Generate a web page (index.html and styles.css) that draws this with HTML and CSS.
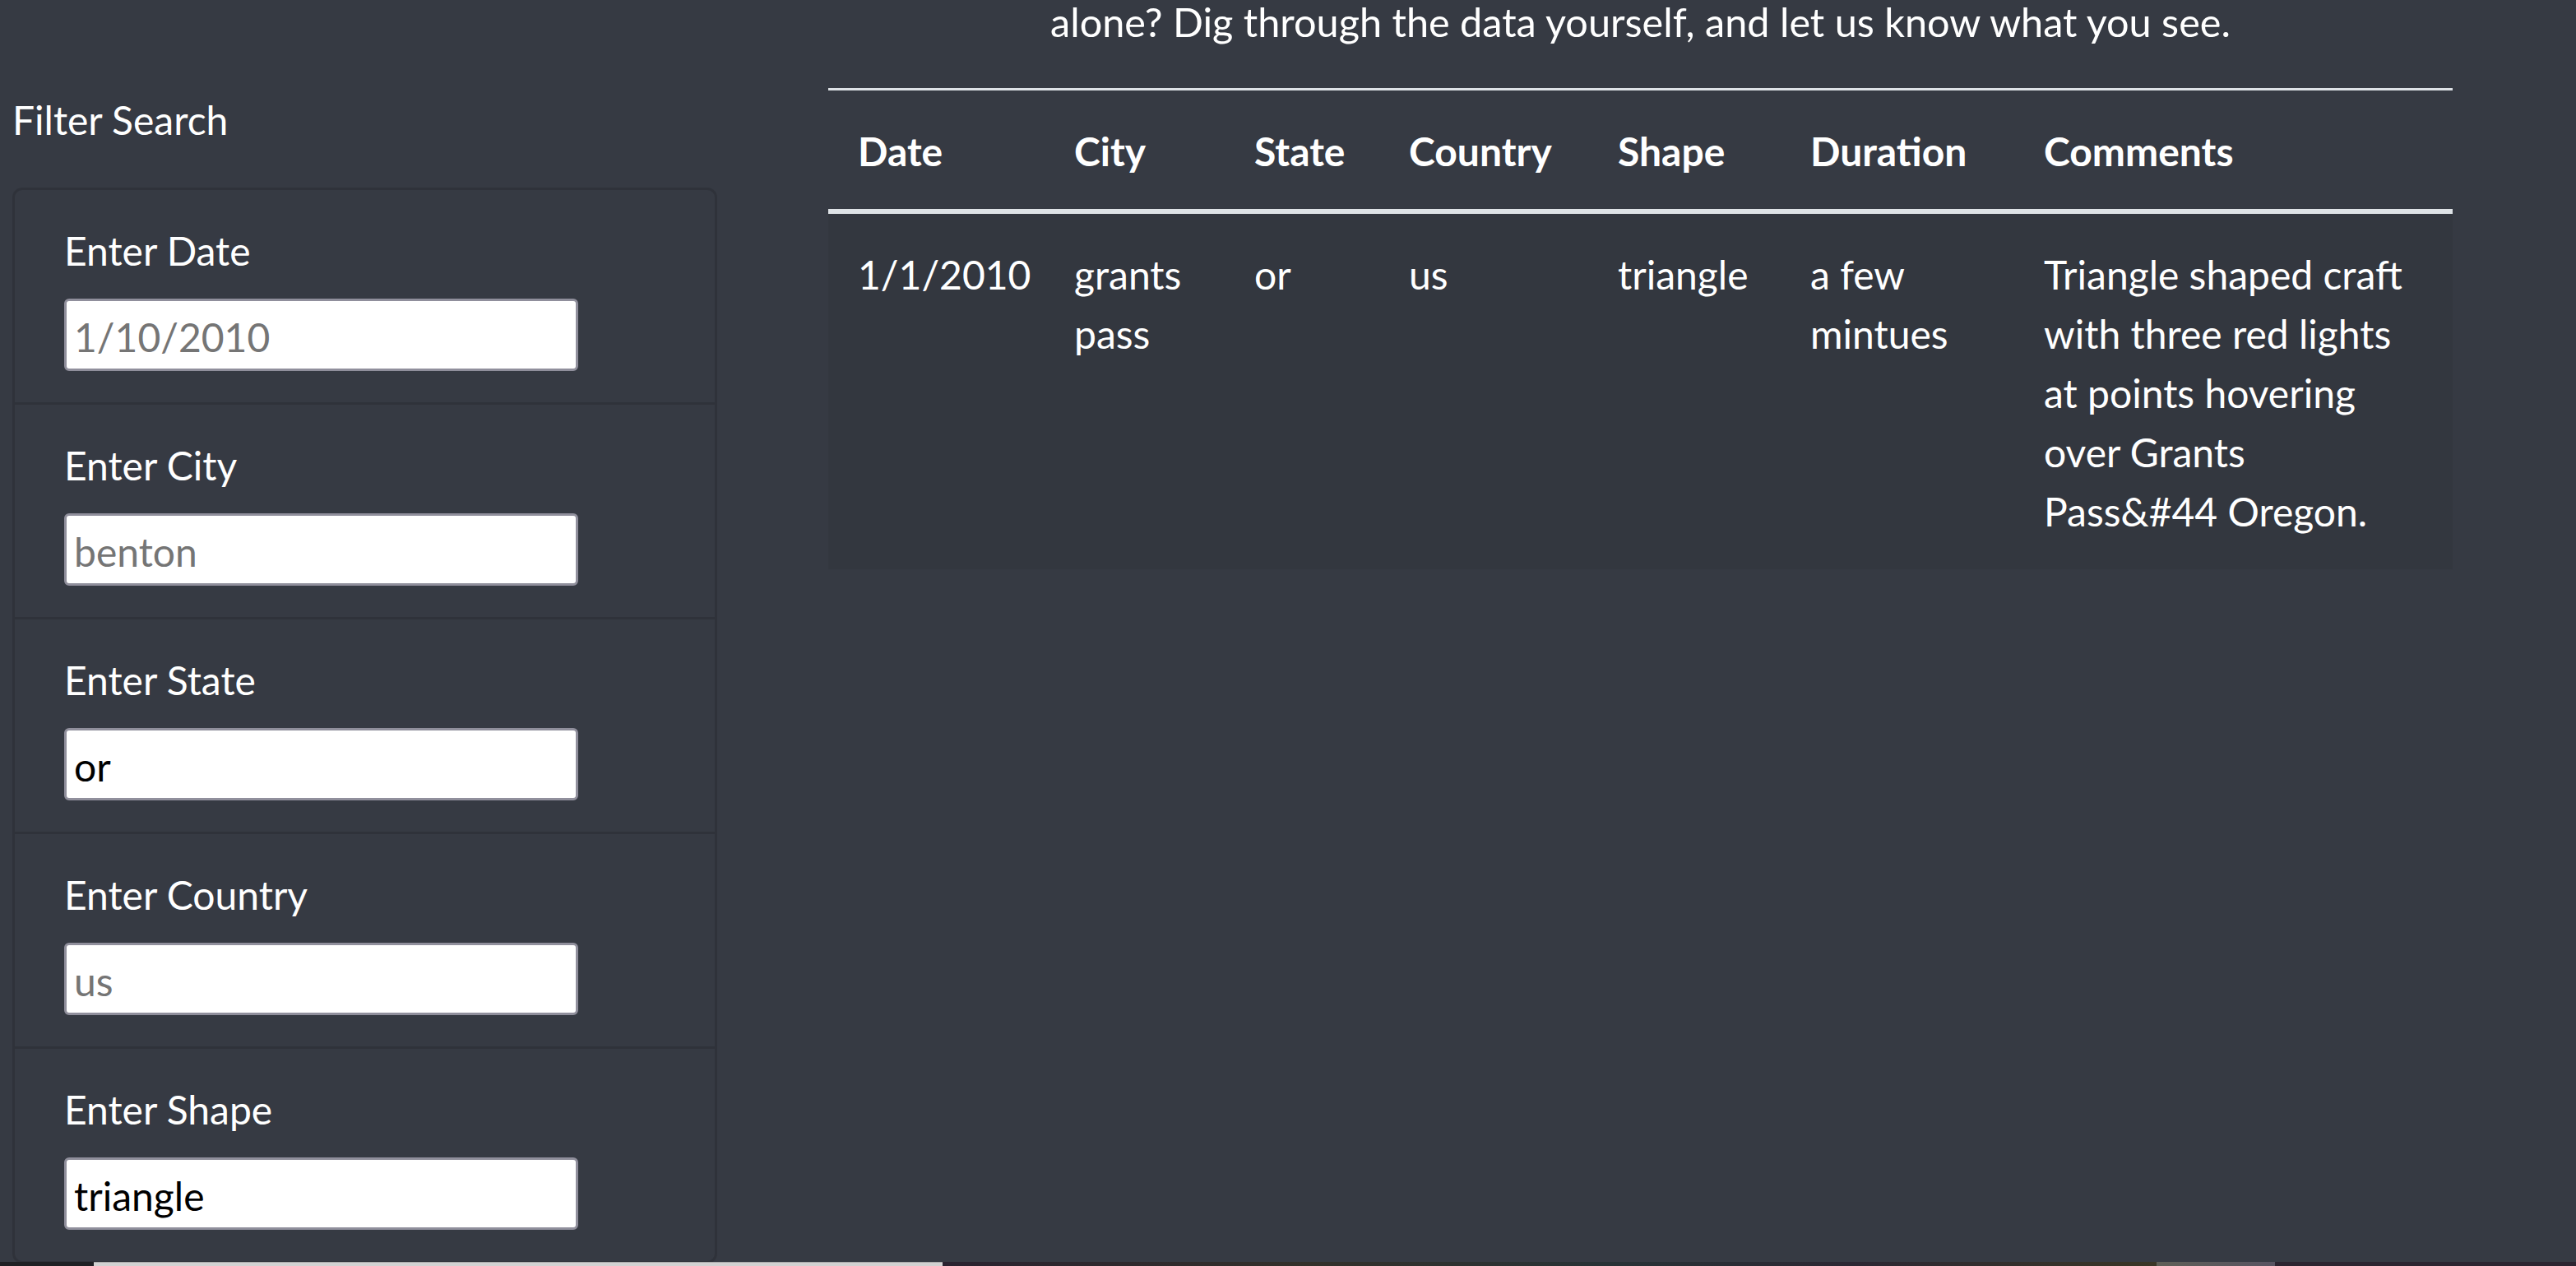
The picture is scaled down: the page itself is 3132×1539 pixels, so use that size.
FILE: index.html
```html
<!DOCTYPE html>
<html lang="en">
<head>
<meta charset="utf-8">
<title>UFO Sightings</title>
<link rel="stylesheet" href="styles.css">
</head>
<body>
<div class="page">
  <aside class="sidebar">
    <div class="sidebar-title">Filter Search</div>
    <form class="filter-card">
      <div class="filter-item">
        <label class="filter-label" for="date">Enter Date</label>
        <input class="filter-input" id="date" type="text" placeholder="1/10/2010">
      </div>
      <div class="filter-item">
        <label class="filter-label" for="city">Enter City</label>
        <input class="filter-input" id="city" type="text" placeholder="benton">
      </div>
      <div class="filter-item">
        <label class="filter-label" for="state">Enter State</label>
        <input class="filter-input" id="state" type="text" placeholder="ca" value="or">
      </div>
      <div class="filter-item">
        <label class="filter-label" for="country">Enter Country</label>
        <input class="filter-input" id="country" type="text" placeholder="us">
      </div>
      <div class="filter-item">
        <label class="filter-label" for="shape">Enter Shape</label>
        <input class="filter-input" id="shape" type="text" placeholder="circle" value="triangle">
      </div>
    </form>
  </aside>
  <main class="content">
    <p class="intro">alone? Dig through the data yourself, and let us know what you see.</p>
    <table class="ufo-table">
      <colgroup>
        <col class="c-date">
        <col class="c-city">
        <col class="c-state">
        <col class="c-country">
        <col class="c-shape">
        <col class="c-duration">
        <col class="c-comments">
      </colgroup>
      <thead>
        <tr>
          <th>Date</th>
          <th>City</th>
          <th>State</th>
          <th>Country</th>
          <th>Shape</th>
          <th>Duration</th>
          <th>Comments</th>
        </tr>
      </thead>
      <tbody>
        <tr>
          <td>1/1/2010</td>
          <td>grants pass</td>
          <td>or</td>
          <td>us</td>
          <td>triangle</td>
          <td>a few mintues</td>
          <td>Triangle shaped craft with three red lights at points hovering over Grants Pass&amp;#44 Oregon.</td>
        </tr>
      </tbody>
    </table>
  </main>
</div>
<div class="taskbar">
  <span class="tb-seg tb-a"></span>
  <span class="tb-seg tb-b"></span>
  <span class="tb-seg tb-c"></span>
  <span class="tb-seg tb-d"></span>
  <span class="tb-seg tb-e"></span>
</div>
</body>
</html>
```
FILE: styles.css
```css
html, body {
  margin: 0;
  padding: 0;
  height: 100%;
  overflow: hidden;
}

body {
  background: #363a43;
  color: #ffffff;
  font-family: "Lato", "Open Sans", sans-serif;
  font-size: 48px;
  line-height: 72px;
}

.page {
  display: flex;
  align-items: flex-start;
  padding-left: 15px;
  gap: 135px;
}

.sidebar {
  width: 857px;
  flex: none;
  padding-top: 110px;
}

.sidebar-title {
  margin-bottom: 46px;
}

.filter-card {
  margin: 0;
  border: 3px solid rgba(0, 0, 0, 0.125);
  border-radius: 12px;
  display: flex;
  flex-direction: column;
}

.filter-item {
  padding: 38px 60px 38px;
  border-bottom: 3px solid rgba(0, 0, 0, 0.125);
  display: flex;
  flex-direction: column;
  align-items: flex-start;
}

.filter-item:last-child {
  border-bottom: none;
}

.filter-label {
  display: block;
  margin-bottom: 22px;
}

.filter-input {
  box-sizing: border-box;
  width: 625px;
  height: 88px;
  border: 3px solid #908f9c;
  border-radius: 6px;
  background: #ffffff;
  color: #000000;
  font-family: "Lato", "Open Sans", sans-serif;
  font-size: 48px;
  padding: 4px 9px 0;
  margin: 0;
  outline: none;
}

.filter-input::placeholder {
  color: #757575;
  opacity: 1;
}

.content {
  width: 1975px;
  flex: none;
}

.intro {
  margin: -10px 0 45px;
  text-align: center;
  font-size: 48.6px;
}

.ufo-table {
  width: 1975px;
  table-layout: fixed;
  border-collapse: collapse;
}

.c-date { width: 263px; }
.c-city { width: 219px; }
.c-state { width: 188px; }
.c-country { width: 254px; }
.c-shape { width: 234px; }
.c-duration { width: 284px; }
.c-comments { width: 533px; }

.ufo-table th,
.ufo-table td {
  padding: 38px 36px 34px;
  text-align: left;
  vertical-align: top;
}

.ufo-table th {
  font-weight: 700;
  border-top: 3px solid #dee2e6;
  border-bottom: 6px solid #dee2e6;
}

.ufo-table tbody tr {
  background: rgba(0, 0, 0, 0.05);
}

.taskbar {
  position: fixed;
  left: 0;
  right: 0;
  bottom: 0;
  height: 5px;
  display: flex;
}

.tb-seg { display: block; height: 100%; }
.tb-a { width: 114px; background: #1f2024; }
.tb-b { width: 1032px; background: #d2d2d2; border-top: 1px solid #a9a9a9; box-sizing: border-box; }
.tb-c { width: 1476px; background: linear-gradient(90deg, #2a2230 0%, #33302a 30%, #283236 55%, #2c2733 75%, #3a3626 100%); }
.tb-d { width: 144px; background: linear-gradient(90deg, #5f5f57, #585462); }
.tb-e { flex: 1; background: #2c2430; }
```
